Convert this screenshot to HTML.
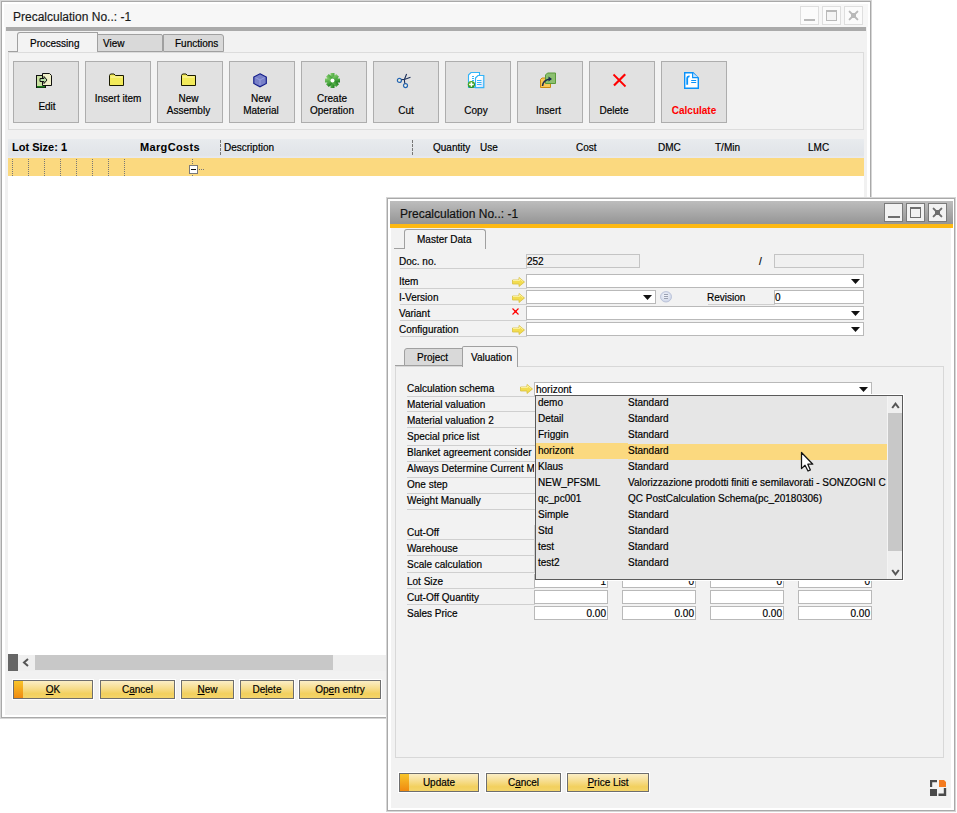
<!DOCTYPE html>
<html><head><meta charset="utf-8"><style>
html,body{margin:0;padding:0;}
body{width:957px;height:813px;position:relative;overflow:hidden;background:#fff;font-family:"Liberation Sans",sans-serif;}
body div, body svg{position:absolute;}
.t{font-size:10px;line-height:12px;white-space:nowrap;color:#000;-webkit-text-stroke:0.18px currentColor;}
.b{-webkit-text-stroke:0 !important;}
u{text-decoration:underline;text-underline-offset:1px;}
</style></head><body>
<div style="left:0px;top:0px;width:872px;height:719px;background:#d6d6d6"></div>
<div style="left:1px;top:1px;width:870px;height:717px;background:#a9a9a9"></div>
<div style="left:2px;top:2px;width:868px;height:715px;background:#fff"></div>
<div style="left:4px;top:4px;width:864px;height:23px;background:#f7f7f7"></div>
<div style="left:5px;top:27px;width:862px;height:688px;background:#f1f1f1"></div>
<div style="left:6px;top:27px;width:860px;height:4px;background:#aaaaaa"></div>
<div style="left:5px;top:31px;width:862px;height:21px;background:#f2f2f2"></div>
<div class="t" style="left:13px;top:11px;font-size:12px;color:#1a1a1a;">Precalculation No..: -1</div>
<div style="left:800px;top:6px;width:19px;height:19px;background:#fbfbfb;box-sizing:border-box;border:1px solid #dedede"></div>
<div style="left:822px;top:6px;width:19px;height:19px;background:#fbfbfb;box-sizing:border-box;border:1px solid #dedede"></div>
<div style="left:844px;top:6px;width:19px;height:19px;background:#fbfbfb;box-sizing:border-box;border:1px solid #dedede"></div>
<div style="left:804px;top:19px;width:11px;height:2px;background:#b9b9b9"></div>
<div style="left:826px;top:10px;width:11px;height:11px;box-sizing:border-box;border:1px solid #b9b9b9;border-top-width:2px;background:#f4f4f4"></div>
<svg style="left:848px;top:10px" width="11" height="11" viewBox="0 0 11 11"><path d="M1.6 1.6 L9.4 9.4 M9.4 1.6 L1.6 9.4" stroke="#b9b9b9" stroke-width="2" stroke-linecap="round"/><rect x="3" y="3" width="5" height="5" fill="#b9b9b9"/></svg>
<div style="left:8px;top:51px;width:10px;height:1px;background:#a0a0a0"></div>
<div style="left:17px;top:32px;width:81px;height:20px;box-sizing:border-box;border:1px solid #a0a0a0;border-bottom:none;border-top-left-radius:3px;background:#f3f3f3"></div>
<div style="left:97px;top:34px;width:66px;height:18px;box-sizing:border-box;border:1px solid #a0a0a0;border-top-right-radius:2px;background:#d9d9d9"></div>
<div style="left:163px;top:34px;width:61px;height:18px;box-sizing:border-box;border:1px solid #a0a0a0;border-top-right-radius:3px;background:#d9d9d9"></div>
<div class="t" style="left:30px;top:38px;font-size:10px;">Processing</div>
<div class="t" style="left:103px;top:38px;font-size:10px;">View</div>
<div class="t" style="left:175px;top:38px;font-size:10px;">Functions</div>
<div style="left:8px;top:52px;width:856px;height:78px;box-sizing:border-box;border:1px solid #dcdcdc;background:#f3f3f3"></div>
<div style="left:13px;top:61px;width:66px;height:62px;box-sizing:border-box;border:1px solid #adadad;background:#e1e1e1"></div>
<div class="t" style="left:14px;top:101px;font-size:10px;width:66px;text-align:center;">Edit</div>
<div style="left:85px;top:61px;width:66px;height:62px;box-sizing:border-box;border:1px solid #adadad;background:#e1e1e1"></div>
<div class="t" style="left:85px;top:93px;font-size:10px;width:66px;text-align:center;">Insert item</div>
<div style="left:157px;top:61px;width:66px;height:62px;box-sizing:border-box;border:1px solid #adadad;background:#e1e1e1"></div>
<div class="t" style="left:155.5px;top:93px;font-size:10px;width:66px;text-align:center;">New</div>
<div class="t" style="left:155.5px;top:105px;font-size:10px;width:66px;text-align:center;">Assembly</div>
<div style="left:229px;top:61px;width:66px;height:62px;box-sizing:border-box;border:1px solid #adadad;background:#e1e1e1"></div>
<div class="t" style="left:228px;top:93px;font-size:10px;width:66px;text-align:center;">New</div>
<div class="t" style="left:228px;top:105px;font-size:10px;width:66px;text-align:center;">Material</div>
<div style="left:301px;top:61px;width:66px;height:62px;box-sizing:border-box;border:1px solid #adadad;background:#e1e1e1"></div>
<div class="t" style="left:299px;top:93px;font-size:10px;width:66px;text-align:center;">Create</div>
<div class="t" style="left:299px;top:105px;font-size:10px;width:66px;text-align:center;">Operation</div>
<div style="left:373px;top:61px;width:66px;height:62px;box-sizing:border-box;border:1px solid #adadad;background:#e1e1e1"></div>
<div class="t" style="left:373px;top:105px;font-size:10px;width:66px;text-align:center;">Cut</div>
<div style="left:445px;top:61px;width:66px;height:62px;box-sizing:border-box;border:1px solid #adadad;background:#e1e1e1"></div>
<div class="t" style="left:443px;top:105px;font-size:10px;width:66px;text-align:center;">Copy</div>
<div style="left:517px;top:61px;width:66px;height:62px;box-sizing:border-box;border:1px solid #adadad;background:#e1e1e1"></div>
<div class="t" style="left:515.5px;top:105px;font-size:10px;width:66px;text-align:center;">Insert</div>
<div style="left:589px;top:61px;width:66px;height:62px;box-sizing:border-box;border:1px solid #adadad;background:#e1e1e1"></div>
<div class="t" style="left:581px;top:105px;font-size:10px;width:66px;text-align:center;">Delete</div>
<div style="left:661px;top:61px;width:66px;height:62px;box-sizing:border-box;border:1px solid #adadad;background:#e1e1e1"></div>
<div class="t" style="left:661px;top:105px;font-size:10px;font-weight:bold;-webkit-text-stroke:0.05px currentColor;color:#ff0000;width:66px;text-align:center;">Calculate</div>
<svg style="left:35px;top:72px" width="18" height="17" viewBox="0 0 18 17"><rect x="1.5" y="3.5" width="9" height="12" fill="#c8e0a0" stroke="#111"/><rect x="2" y="14" width="8" height="1.5" fill="#1a7a1a"/><path d="M7.5 1.5 H14.5 L16.5 3.5 V13.5 H7.5 Z" fill="#f0f0c8" stroke="#111"/><path d="M5 6.5 H9 V4.5 L12 8 L9 11.5 V9.5 H5 Z" fill="#b8e0a8" stroke="#111" stroke-width="1"/></svg>
<svg style="left:109px;top:73px" width="15" height="13" viewBox="0 0 15 13"><path d="M0.5 2.5 L1.5 1 H5 L6.5 2.5 H14.5 V12.5 H0.5 Z" fill="#f2ea5a" stroke="#1a1a00"/><rect x="1.5" y="3.5" width="12" height="1" fill="#fff8b0"/></svg>
<svg style="left:181px;top:73px" width="15" height="13" viewBox="0 0 15 13"><path d="M0.5 2.5 L1.5 1 H5 L6.5 2.5 H14.5 V12.5 H0.5 Z" fill="#f2ea5a" stroke="#1a1a00"/><rect x="1.5" y="3.5" width="12" height="1" fill="#fff8b0"/></svg>
<svg style="left:253px;top:73px" width="15" height="15" viewBox="0 0 15 15"><path d="M7 0.8 L13.3 4 V10.5 L7 13.8 L0.8 10.5 V4 Z" fill="#7880c8" stroke="#141e8a" stroke-width="1.2"/><path d="M2.5 4.6 L7 7 L11.6 4.6 M7 7 V12" stroke="#9aa2e0" stroke-width="0.9" fill="none"/></svg>
<svg style="left:325px;top:73px" width="15" height="15" viewBox="0 0 15 15"><defs><linearGradient id="gg" x1="0" y1="0" x2="1" y2="1"><stop offset="0" stop-color="#8ad070"/><stop offset="0.55" stop-color="#4aa840"/><stop offset="1" stop-color="#1e7a1e"/></linearGradient></defs><g fill="url(#gg)"><circle cx="7.5" cy="7.5" r="5.6"/><rect x="5.5" y="0" width="4" height="15"/><rect x="0" y="5.5" width="15" height="4"/><rect x="5.5" y="0.3" width="4" height="14.4" transform="rotate(45 7.5 7.5)"/><rect x="5.5" y="0.3" width="4" height="14.4" transform="rotate(-45 7.5 7.5)"/></g><circle cx="7.5" cy="7.5" r="2" fill="#fff"/></svg>
<svg style="left:395px;top:72px" width="17" height="17" viewBox="0 0 17 17"><circle cx="4.4" cy="8.4" r="2" fill="#f4f0e0" stroke="#2466b4" stroke-width="1.2"/><circle cx="10.5" cy="13.6" r="2" fill="#f4f0e0" stroke="#2466b4" stroke-width="1.2"/><path d="M6.3 7.8 L9.5 7.2 L11.6 2 M9.8 11.5 L9.3 7.5 L15.5 5.3" stroke="#1a2e5a" stroke-width="1.1" fill="none"/></svg>
<svg style="left:466px;top:70px" width="20" height="20" viewBox="0 0 20 20"><defs><linearGradient id="cg" x1="0" y1="0" x2="1" y2="1"><stop offset="0.4" stop-color="#fff"/><stop offset="1" stop-color="#c8dcff"/></linearGradient><radialGradient id="pg" cx="0.4" cy="0.35" r="0.7"><stop offset="0" stop-color="#6cc040"/><stop offset="1" stop-color="#1a8a10"/></radialGradient></defs><path d="M2.5 5 L5 2.5 H13.5 V17.5 H2.5 Z" fill="#fff" stroke="#33b4f8" stroke-width="1.1"/><path d="M6 6.5 H8 M6 8.5 H8 M6 10.5 H8" stroke="#33b4f8" stroke-width="1"/><path d="M9.5 8 L12 5.5 H17.8 V17.6 H9.5 Z" fill="url(#cg)" stroke="#33b4f8" stroke-width="1.2"/><path d="M11 10.5 H15.5 M11 12.5 H15.5 M11 14.5 H15.5" stroke="#33b4f8" stroke-width="1.1"/><circle cx="5.4" cy="14.5" r="3.6" fill="url(#pg)"/><path d="M5.4 12.2 V16.8 M3.1 14.5 H7.7" stroke="#fff" stroke-width="1.4"/></svg>
<svg style="left:540px;top:72px" width="17" height="17" viewBox="0 0 17 17"><path d="M0.5 7.5 L2 6 H10.5 V15.5 H0.5 Z" fill="#f8c858" stroke="#c88a10"/><path d="M7.5 1 H15.5 V11.5 H5.5 V3 Z" fill="#8cc070" stroke="#5a9a3a"/><path d="M2.5 14 Q3 8 10 7" stroke="#1a2a50" stroke-width="1.6" fill="none"/><path d="M8.5 4.5 L12 7 L8.5 9.5 Z" fill="#1a2a50"/></svg>
<svg style="left:612px;top:73px" width="15" height="15" viewBox="0 0 15 15"><path d="M1.5 1.5 L13.5 13.5" stroke="#ff0000" stroke-width="1.8"/><path d="M13.2 1.2 L2 12.5" stroke="#ff0000" stroke-width="2.2"/></svg>
<svg style="left:684px;top:72px" width="15" height="17" viewBox="0 0 15 17"><path d="M0.7 0.7 H9 L14.3 6 V16.3 H0.7 Z" fill="#fff" stroke="#0a92fa" stroke-width="1.4"/><path d="M8.6 0.7 V5.6 H14.3" fill="#c4e2ff" stroke="#0a92fa" stroke-width="1.1"/><path d="M3.2 12.8 V6.3 Q3.4 4.2 5.6 4.4" stroke="#0a92fa" stroke-width="1.8" fill="none"/><path d="M7.2 8.5 H12.2 M7.2 10.5 H12.2" stroke="#0a92fa" stroke-width="1"/></svg>
<div style="left:8px;top:139px;width:856px;height:19px;background:linear-gradient(#e8ebee,#e1e4e8 85%,#e7e9ef 95%)"></div>
<div class="t" style="left:12px;top:141px;font-size:11px;font-weight:bold;-webkit-text-stroke:0.05px currentColor;">Lot Size: 1</div>
<div class="t" style="left:140px;top:141px;font-size:11px;font-weight:bold;-webkit-text-stroke:0.05px currentColor;letter-spacing:0.35px;">MargCosts</div>
<div style="left:220px;top:140px;width:1px;height:15px;border-left:1px dashed #777"></div>
<div style="left:412px;top:140px;width:1px;height:15px;border-left:1px dashed #777"></div>
<div class="t" style="left:224px;top:142px;font-size:10px;">Description</div>
<div class="t" style="left:433px;top:142px;font-size:10px;">Quantity</div>
<div class="t" style="left:480px;top:142px;font-size:10px;">Use</div>
<div class="t" style="left:576px;top:142px;font-size:10px;">Cost</div>
<div class="t" style="left:658px;top:142px;font-size:10px;">DMC</div>
<div class="t" style="left:715px;top:142px;font-size:10px;">T/Min</div>
<div class="t" style="left:808px;top:142px;font-size:10px;">LMC</div>
<div style="left:8px;top:158px;width:856px;height:18px;background:#fbd97f"></div>
<div style="left:12px;top:159px;width:1px;height:17px;background:repeating-linear-gradient(#777 0 1px,transparent 1px 2px)"></div>
<div style="left:28px;top:159px;width:1px;height:17px;background:repeating-linear-gradient(#777 0 1px,transparent 1px 2px)"></div>
<div style="left:44px;top:159px;width:1px;height:17px;background:repeating-linear-gradient(#777 0 1px,transparent 1px 2px)"></div>
<div style="left:60px;top:159px;width:1px;height:17px;background:repeating-linear-gradient(#777 0 1px,transparent 1px 2px)"></div>
<div style="left:76px;top:159px;width:1px;height:17px;background:repeating-linear-gradient(#777 0 1px,transparent 1px 2px)"></div>
<div style="left:92px;top:159px;width:1px;height:17px;background:repeating-linear-gradient(#777 0 1px,transparent 1px 2px)"></div>
<div style="left:108px;top:159px;width:1px;height:17px;background:repeating-linear-gradient(#777 0 1px,transparent 1px 2px)"></div>
<div style="left:124px;top:159px;width:1px;height:17px;background:repeating-linear-gradient(#777 0 1px,transparent 1px 2px)"></div>
<div style="left:192px;top:159px;width:1px;height:6px;background:repeating-linear-gradient(#777 0 1px,transparent 1px 2px)"></div>
<div style="left:192px;top:175px;width:1px;height:1px;background:#777"></div>
<div style="left:189px;top:165px;width:9px;height:9px;box-sizing:border-box;border:1px solid #7a7a7a;background:#fff"></div>
<div style="left:191px;top:169px;width:5px;height:1px;background:#111"></div>
<div style="left:199px;top:169px;width:1px;height:1px;background:#777"></div>
<div style="left:201px;top:169px;width:1px;height:1px;background:#777"></div>
<div style="left:203px;top:169px;width:1px;height:1px;background:#777"></div>
<div style="left:8px;top:176px;width:856px;height:479px;background:#fff"></div>
<div style="left:8px;top:655px;width:378px;height:16px;background:#efefef"></div>
<div style="left:8px;top:654px;width:10px;height:17px;background:#666"></div>
<svg style="left:22px;top:658px" width="8" height="9" viewBox="0 0 8 9"><path d="M6 1 L2 4.5 L6 8" stroke="#555" stroke-width="2" fill="none"/></svg>
<div style="left:35px;top:655px;width:298px;height:15px;background:#c8c8c8"></div>
<div style="left:12px;top:679px;width:82px;height:21px;background:#fff"></div>
<div style="left:13px;top:680px;width:80px;height:19px;box-sizing:border-box;border:1px solid #6e6e6e;background:linear-gradient(#fbeec6 0%,#f6dc8a 45%,#f2d05e 75%,#f4d56a 100%)"></div>
<div style="left:14px;top:681px;width:9px;height:17px;background:linear-gradient(#f8c52a,#f08a10)"></div>
<div class="t" style="left:13px;top:684px;font-size:10px;width:80px;text-align:center;"><u>O</u>K</div>
<div style="left:99px;top:679px;width:77px;height:21px;background:#fff"></div>
<div style="left:100px;top:680px;width:75px;height:19px;box-sizing:border-box;border:1px solid #6e6e6e;background:linear-gradient(#fbeec6 0%,#f6dc8a 45%,#f2d05e 75%,#f4d56a 100%)"></div>
<div class="t" style="left:100px;top:684px;font-size:10px;width:75px;text-align:center;">C<u>a</u>ncel</div>
<div style="left:180px;top:679px;width:55px;height:21px;background:#fff"></div>
<div style="left:181px;top:680px;width:53px;height:19px;box-sizing:border-box;border:1px solid #6e6e6e;background:linear-gradient(#fbeec6 0%,#f6dc8a 45%,#f2d05e 75%,#f4d56a 100%)"></div>
<div class="t" style="left:181px;top:684px;font-size:10px;width:53px;text-align:center;"><u>N</u>ew</div>
<div style="left:239px;top:679px;width:56px;height:21px;background:#fff"></div>
<div style="left:240px;top:680px;width:54px;height:19px;box-sizing:border-box;border:1px solid #6e6e6e;background:linear-gradient(#fbeec6 0%,#f6dc8a 45%,#f2d05e 75%,#f4d56a 100%)"></div>
<div class="t" style="left:240px;top:684px;font-size:10px;width:54px;text-align:center;">De<u>l</u>ete</div>
<div style="left:298px;top:679px;width:84px;height:21px;background:#fff"></div>
<div style="left:299px;top:680px;width:82px;height:19px;box-sizing:border-box;border:1px solid #6e6e6e;background:linear-gradient(#fbeec6 0%,#f6dc8a 45%,#f2d05e 75%,#f4d56a 100%)"></div>
<div class="t" style="left:299px;top:684px;font-size:10px;width:82px;text-align:center;">Op<u>e</u>n entry</div>
<div style="left:386px;top:197px;width:570px;height:615px;background:#d6d6d6"></div>
<div style="left:387px;top:198px;width:568px;height:613px;background:#a9a9a9"></div>
<div style="left:388px;top:199px;width:566px;height:611px;background:#fff"></div>
<div style="left:391px;top:228px;width:560px;height:580px;background:#f2f2f2"></div>
<div style="left:390px;top:201px;width:563px;height:23px;background:linear-gradient(#bdbdbd,#959595)"></div>
<div style="left:390px;top:224px;width:563px;height:4px;background:#fdb913"></div>
<div class="t" style="left:400px;top:208px;font-size:12px;color:#111;">Precalculation No..: -1</div>
<div style="left:884px;top:203px;width:19px;height:19px;box-sizing:border-box;border:1px solid #7a7a7a;background:#f2f2f2"></div>
<div style="left:906px;top:203px;width:19px;height:19px;box-sizing:border-box;border:1px solid #7a7a7a;background:#f2f2f2"></div>
<div style="left:928px;top:203px;width:19px;height:19px;box-sizing:border-box;border:1px solid #7a7a7a;background:#f2f2f2"></div>
<div style="left:888px;top:216px;width:12px;height:2px;background:#6e6e6e"></div>
<div style="left:910px;top:207px;width:11px;height:11px;box-sizing:border-box;border:1px solid #6e6e6e;border-top-width:2px"></div>
<svg style="left:932px;top:207px" width="11" height="11" viewBox="0 0 11 11"><path d="M1.6 1.6 L9.4 9.4 M9.4 1.6 L1.6 9.4" stroke="#6e6e6e" stroke-width="2" stroke-linecap="round"/><rect x="3" y="3" width="5" height="5" fill="#6e6e6e"/></svg>
<div style="left:394px;top:248px;width:11px;height:1px;background:#a0a0a0"></div>
<div style="left:404px;top:229px;width:82px;height:20px;box-sizing:border-box;border:1px solid #a0a0a0;border-bottom:none;border-top-left-radius:3px;border-top-right-radius:3px;background:#f2f2f2"></div>
<div class="t" style="left:417px;top:234px;font-size:10px;">Master Data</div>
<div class="t" style="left:399px;top:256px;font-size:10px;">Doc. no.</div>
<div style="left:400px;top:268px;width:127px;height:1px;background:#cfcfcf"></div>
<div style="left:526px;top:254px;width:114px;height:14px;box-sizing:border-box;border:1px solid #c4c4c4;background:#f0f0f0"></div>
<div class="t" style="left:527px;top:256px;font-size:10px;">252</div>
<div class="t" style="left:759px;top:256px;font-size:10px;">/</div>
<div style="left:774px;top:254px;width:90px;height:14px;box-sizing:border-box;border:1px solid #c4c4c4;background:#f0f0f0"></div>
<div class="t" style="left:399px;top:276px;font-size:10px;">Item</div>
<div style="left:400px;top:288px;width:127px;height:1px;background:#cfcfcf"></div>
<svg style="left:512px;top:277px" width="13" height="10" viewBox="0 0 13 10"><path d="M0.5 3 H7 V0.5 L12.5 5 L7 9.5 V7 H0.5 Z" fill="#f2dc50" stroke="#d8c040" stroke-width="0.8"/><path d="M1 3.5 H7.5 V1.8 L11 4.5" fill="none" stroke="#fff7b0" stroke-width="0.8"/></svg>
<div class="t" style="left:399px;top:292px;font-size:10px;">I-Version</div>
<div style="left:400px;top:304px;width:127px;height:1px;background:#cfcfcf"></div>
<svg style="left:512px;top:293px" width="13" height="10" viewBox="0 0 13 10"><path d="M0.5 3 H7 V0.5 L12.5 5 L7 9.5 V7 H0.5 Z" fill="#f2dc50" stroke="#d8c040" stroke-width="0.8"/><path d="M1 3.5 H7.5 V1.8 L11 4.5" fill="none" stroke="#fff7b0" stroke-width="0.8"/></svg>
<div class="t" style="left:399px;top:308px;font-size:10px;">Variant</div>
<div style="left:400px;top:320px;width:127px;height:1px;background:#cfcfcf"></div>
<svg style="left:511px;top:308px" width="8" height="8" viewBox="0 0 8 8"><path d="M1.5 0.5 L7.5 6.5 M7.5 0.5 L1.5 6.5" stroke="#f00" stroke-width="1.1"/><rect x="3.5" y="2.5" width="2" height="2" fill="#f00"/></svg>
<div class="t" style="left:399px;top:324px;font-size:10px;">Configuration</div>
<div style="left:400px;top:336px;width:127px;height:1px;background:#cfcfcf"></div>
<svg style="left:512px;top:325px" width="13" height="10" viewBox="0 0 13 10"><path d="M0.5 3 H7 V0.5 L12.5 5 L7 9.5 V7 H0.5 Z" fill="#f2dc50" stroke="#d8c040" stroke-width="0.8"/><path d="M1 3.5 H7.5 V1.8 L11 4.5" fill="none" stroke="#fff7b0" stroke-width="0.8"/></svg>
<div style="left:526px;top:274px;width:338px;height:14px;box-sizing:border-box;border:1px solid #b9b9b9;background:#fff"></div>
<svg style="left:851px;top:279px" width="9" height="5" viewBox="0 0 9 5"><path d="M0 0 H9 L4.5 5 Z" fill="#111"/></svg>
<div style="left:526px;top:290px;width:130px;height:14px;box-sizing:border-box;border:1px solid #b9b9b9;background:#fff"></div>
<svg style="left:643px;top:295px" width="9" height="5" viewBox="0 0 9 5"><path d="M0 0 H9 L4.5 5 Z" fill="#111"/></svg>
<svg style="left:660px;top:291px" width="12" height="12" viewBox="0 0 12 12"><defs><radialGradient id="cig" cx="0.45" cy="0.4" r="0.6"><stop offset="0" stop-color="#f4f6fb"/><stop offset="1" stop-color="#cdd5e8"/></radialGradient></defs><ellipse cx="6" cy="5.8" rx="5.5" ry="5.2" fill="url(#cig)" stroke="#b8c0d6" stroke-width="0.9"/><path d="M4 3.5 H8 M4 5.5 H8 M4 7.5 H8" stroke="#9aa0b0" stroke-width="1"/></svg>
<div class="t" style="left:707px;top:292px;font-size:10px;">Revision</div>
<div style="left:708px;top:304px;width:67px;height:1px;background:#cfcfcf"></div>
<div style="left:774px;top:290px;width:90px;height:14px;box-sizing:border-box;border:1px solid #b9b9b9;background:#fff"></div>
<div class="t" style="left:775px;top:292px;font-size:10px;">0</div>
<div style="left:526px;top:306px;width:338px;height:14px;box-sizing:border-box;border:1px solid #b9b9b9;background:#fff"></div>
<svg style="left:851px;top:311px" width="9" height="5" viewBox="0 0 9 5"><path d="M0 0 H9 L4.5 5 Z" fill="#111"/></svg>
<div style="left:526px;top:322px;width:338px;height:14px;box-sizing:border-box;border:1px solid #b9b9b9;background:#fff"></div>
<svg style="left:851px;top:327px" width="9" height="5" viewBox="0 0 9 5"><path d="M0 0 H9 L4.5 5 Z" fill="#111"/></svg>
<div style="left:395px;top:365px;width:10px;height:1px;background:#a0a0a0"></div>
<div style="left:395px;top:366px;width:549px;height:392px;box-sizing:border-box;border:1px solid #d8d8d8;background:#f2f2f2"></div>
<div style="left:404px;top:348px;width:59px;height:18px;box-sizing:border-box;border:1px solid #a0a0a0;border-top-left-radius:3px;background:#d9d9d9"></div>
<div style="left:462px;top:346px;width:56px;height:21px;box-sizing:border-box;border:1px solid #a0a0a0;border-bottom:none;border-top-right-radius:3px;border-top-left-radius:2px;background:#f2f2f2"></div>
<div class="t" style="left:417px;top:352px;font-size:10px;">Project</div>
<div class="t" style="left:471px;top:352px;font-size:10px;">Valuation</div>
<div style="left:406px;top:380px;width:128px;height:245px;overflow:hidden">
<div class="t" style="left:1px;top:3px">Calculation schema</div>
<div class="t" style="left:1px;top:19px">Material valuation</div>
<div class="t" style="left:1px;top:35px">Material valuation 2</div>
<div class="t" style="left:1px;top:51px">Special price list</div>
<div class="t" style="left:1px;top:67px">Blanket agreement consider</div>
<div class="t" style="left:1px;top:83px">Always Determine Current M</div>
<div class="t" style="left:1px;top:99px">One step</div>
<div class="t" style="left:1px;top:115px">Weight Manually</div>
<div class="t" style="left:1px;top:147px">Cut-Off</div>
<div class="t" style="left:1px;top:163px">Warehouse</div>
<div class="t" style="left:1px;top:179px">Scale calculation</div>
<div class="t" style="left:1px;top:196px">Lot Size</div>
<div class="t" style="left:1px;top:212px">Cut-Off Quantity</div>
<div class="t" style="left:1px;top:228px">Sales Price</div>
</div>
<div style="left:407px;top:396px;width:128px;height:1px;background:#cfcfcf"></div>
<div style="left:407px;top:411px;width:128px;height:1px;background:#cfcfcf"></div>
<div style="left:407px;top:427px;width:128px;height:1px;background:#cfcfcf"></div>
<div style="left:407px;top:445px;width:128px;height:1px;background:#cfcfcf"></div>
<div style="left:407px;top:461px;width:128px;height:1px;background:#cfcfcf"></div>
<div style="left:407px;top:477px;width:128px;height:1px;background:#cfcfcf"></div>
<div style="left:407px;top:493px;width:128px;height:1px;background:#cfcfcf"></div>
<div style="left:407px;top:509px;width:128px;height:1px;background:#cfcfcf"></div>
<div style="left:407px;top:539px;width:128px;height:1px;background:#cfcfcf"></div>
<div style="left:407px;top:555px;width:128px;height:1px;background:#cfcfcf"></div>
<div style="left:407px;top:572px;width:128px;height:1px;background:#cfcfcf"></div>
<div style="left:407px;top:588px;width:128px;height:1px;background:#cfcfcf"></div>
<div style="left:407px;top:604px;width:128px;height:1px;background:#cfcfcf"></div>
<svg style="left:520px;top:384px" width="13" height="10" viewBox="0 0 13 10"><path d="M0.5 3 H7 V0.5 L12.5 5 L7 9.5 V7 H0.5 Z" fill="#f2dc50" stroke="#d8c040" stroke-width="0.8"/><path d="M1 3.5 H7.5 V1.8 L11 4.5" fill="none" stroke="#fff7b0" stroke-width="0.8"/></svg>
<div style="left:534px;top:382px;width:338px;height:14px;box-sizing:border-box;border:1px solid #b9b9b9;background:#fff"></div>
<svg style="left:859px;top:387px" width="9" height="5" viewBox="0 0 9 5"><path d="M0 0 H9 L4.5 5 Z" fill="#111"/></svg>
<div class="t" style="left:536px;top:384px;font-size:10px;">horizont</div>
<div style="left:534px;top:525px;width:1px;height:48px;background:#d0d0d0"></div>
<div style="left:534px;top:574px;width:74px;height:14px;box-sizing:border-box;border:1px solid #b9b9b9;background:#fff"></div>
<div style="left:534px;top:590px;width:74px;height:14px;box-sizing:border-box;border:1px solid #b9b9b9;background:#fff"></div>
<div style="left:534px;top:606px;width:74px;height:14px;box-sizing:border-box;border:1px solid #b9b9b9;background:#fff"></div>
<div class="t" style="left:534px;top:576px;font-size:10px;width:72px;text-align:right;">1</div>
<div class="t" style="left:534px;top:608px;font-size:10px;width:72px;text-align:right;">0.00</div>
<div style="left:622px;top:574px;width:74px;height:14px;box-sizing:border-box;border:1px solid #b9b9b9;background:#fff"></div>
<div style="left:622px;top:590px;width:74px;height:14px;box-sizing:border-box;border:1px solid #b9b9b9;background:#fff"></div>
<div style="left:622px;top:606px;width:74px;height:14px;box-sizing:border-box;border:1px solid #b9b9b9;background:#fff"></div>
<div class="t" style="left:622px;top:576px;font-size:10px;width:72px;text-align:right;">0</div>
<div class="t" style="left:622px;top:608px;font-size:10px;width:72px;text-align:right;">0.00</div>
<div style="left:710px;top:574px;width:74px;height:14px;box-sizing:border-box;border:1px solid #b9b9b9;background:#fff"></div>
<div style="left:710px;top:590px;width:74px;height:14px;box-sizing:border-box;border:1px solid #b9b9b9;background:#fff"></div>
<div style="left:710px;top:606px;width:74px;height:14px;box-sizing:border-box;border:1px solid #b9b9b9;background:#fff"></div>
<div class="t" style="left:710px;top:576px;font-size:10px;width:72px;text-align:right;">0</div>
<div class="t" style="left:710px;top:608px;font-size:10px;width:72px;text-align:right;">0.00</div>
<div style="left:798px;top:574px;width:74px;height:14px;box-sizing:border-box;border:1px solid #b9b9b9;background:#fff"></div>
<div style="left:798px;top:590px;width:74px;height:14px;box-sizing:border-box;border:1px solid #b9b9b9;background:#fff"></div>
<div style="left:798px;top:606px;width:74px;height:14px;box-sizing:border-box;border:1px solid #b9b9b9;background:#fff"></div>
<div class="t" style="left:798px;top:576px;font-size:10px;width:72px;text-align:right;">0</div>
<div class="t" style="left:798px;top:608px;font-size:10px;width:72px;text-align:right;">0.00</div>
<div style="left:535px;top:394px;width:369px;height:187px;background:#fff"></div>
<div style="left:535px;top:395px;width:368px;height:185px;box-sizing:border-box;border:1px solid #5a5a5a;background:#e6e6e6"></div>
<div style="left:536px;top:443px;width:92px;height:16px;background:#fbd97f"></div>
<div style="left:628px;top:444px;width:259px;height:16px;background:#fbd97f"></div>
<div style="left:887px;top:396px;width:1px;height:183px;background:#f4f4f4"></div>
<div style="left:888px;top:396px;width:14px;height:183px;background:#efefef"></div>
<div style="left:888px;top:413px;width:14px;height:138px;background:#c8c8c8"></div>
<svg style="left:891px;top:401px" width="9" height="8" viewBox="0 0 9 8"><path d="M1.2 7 L4.5 2.6 L7.8 7" stroke="#555" stroke-width="2" fill="none"/></svg>
<svg style="left:891px;top:569px" width="9" height="8" viewBox="0 0 9 8"><path d="M1.2 1 L4.5 5.4 L7.8 1" stroke="#555" stroke-width="2" fill="none"/></svg>
<div style="left:536px;top:396px;width:351px;height:183px;overflow:hidden">
<div class="t" style="left:2px;top:1px">demo</div>
<div class="t" style="left:92px;top:1px">Standard</div>
<div class="t" style="left:2px;top:17px">Detail</div>
<div class="t" style="left:92px;top:17px">Standard</div>
<div class="t" style="left:2px;top:33px">Friggin</div>
<div class="t" style="left:92px;top:33px">Standard</div>
<div class="t" style="left:2px;top:49px">horizont</div>
<div class="t" style="left:92px;top:49px">Standard</div>
<div class="t" style="left:2px;top:65px">Klaus</div>
<div class="t" style="left:92px;top:65px">Standard</div>
<div class="t" style="left:2px;top:81px">NEW_PFSML</div>
<div class="t" style="left:92px;top:81px">Valorizzazione prodotti finiti e semilavorati - SONZOGNI C</div>
<div class="t" style="left:2px;top:97px">qc_pc001</div>
<div class="t" style="left:92px;top:97px">QC PostCalculation Schema(pc_20180306)</div>
<div class="t" style="left:2px;top:113px">Simple</div>
<div class="t" style="left:92px;top:113px">Standard</div>
<div class="t" style="left:2px;top:129px">Std</div>
<div class="t" style="left:92px;top:129px">Standard</div>
<div class="t" style="left:2px;top:145px">test</div>
<div class="t" style="left:92px;top:145px">Standard</div>
<div class="t" style="left:2px;top:161px">test2</div>
<div class="t" style="left:92px;top:161px">Standard</div>
</div>
<svg style="left:800px;top:451px" width="15" height="22" viewBox="0 0 15 22"><path d="M1.5 1.5 V17.6 L5 14.3 L8 20 L10.4 18.9 L7.8 13.2 H12.8 Z" fill="#fff" stroke="#141414" stroke-width="1.25" stroke-linejoin="round"/></svg>
<div style="left:398px;top:772px;width:82px;height:21px;background:#fff"></div>
<div style="left:399px;top:773px;width:80px;height:19px;box-sizing:border-box;border:1px solid #6e6e6e;background:linear-gradient(#fbeec6 0%,#f6dc8a 45%,#f2d05e 75%,#f4d56a 100%)"></div>
<div style="left:400px;top:774px;width:9px;height:17px;background:linear-gradient(#f8c52a,#f08a10)"></div>
<div class="t" style="left:399px;top:777px;font-size:10px;width:80px;text-align:center;">Update</div>
<div style="left:485px;top:772px;width:77px;height:21px;background:#fff"></div>
<div style="left:486px;top:773px;width:75px;height:19px;box-sizing:border-box;border:1px solid #6e6e6e;background:linear-gradient(#fbeec6 0%,#f6dc8a 45%,#f2d05e 75%,#f4d56a 100%)"></div>
<div class="t" style="left:486px;top:777px;font-size:10px;width:75px;text-align:center;">C<u>a</u>ncel</div>
<div style="left:566px;top:772px;width:84px;height:21px;background:#fff"></div>
<div style="left:567px;top:773px;width:82px;height:19px;box-sizing:border-box;border:1px solid #6e6e6e;background:linear-gradient(#fbeec6 0%,#f6dc8a 45%,#f2d05e 75%,#f4d56a 100%)"></div>
<div class="t" style="left:567px;top:777px;font-size:10px;width:82px;text-align:center;"><u>P</u>rice List</div>
<svg style="left:930px;top:780px" width="17" height="16" viewBox="0 0 17 16"><path d="M1 7 V1 H7" stroke="#4a4a4a" stroke-width="2.4" fill="none"/><path d="M9 0 H14 L16 2 V7 H9 Z" fill="#f47b20"/><rect x="0" y="9" width="7" height="7" fill="#4a4a4a"/><path d="M8.5 14.8 H15 V8" stroke="#4a4a4a" stroke-width="2.4" fill="none"/></svg>
</body></html>
